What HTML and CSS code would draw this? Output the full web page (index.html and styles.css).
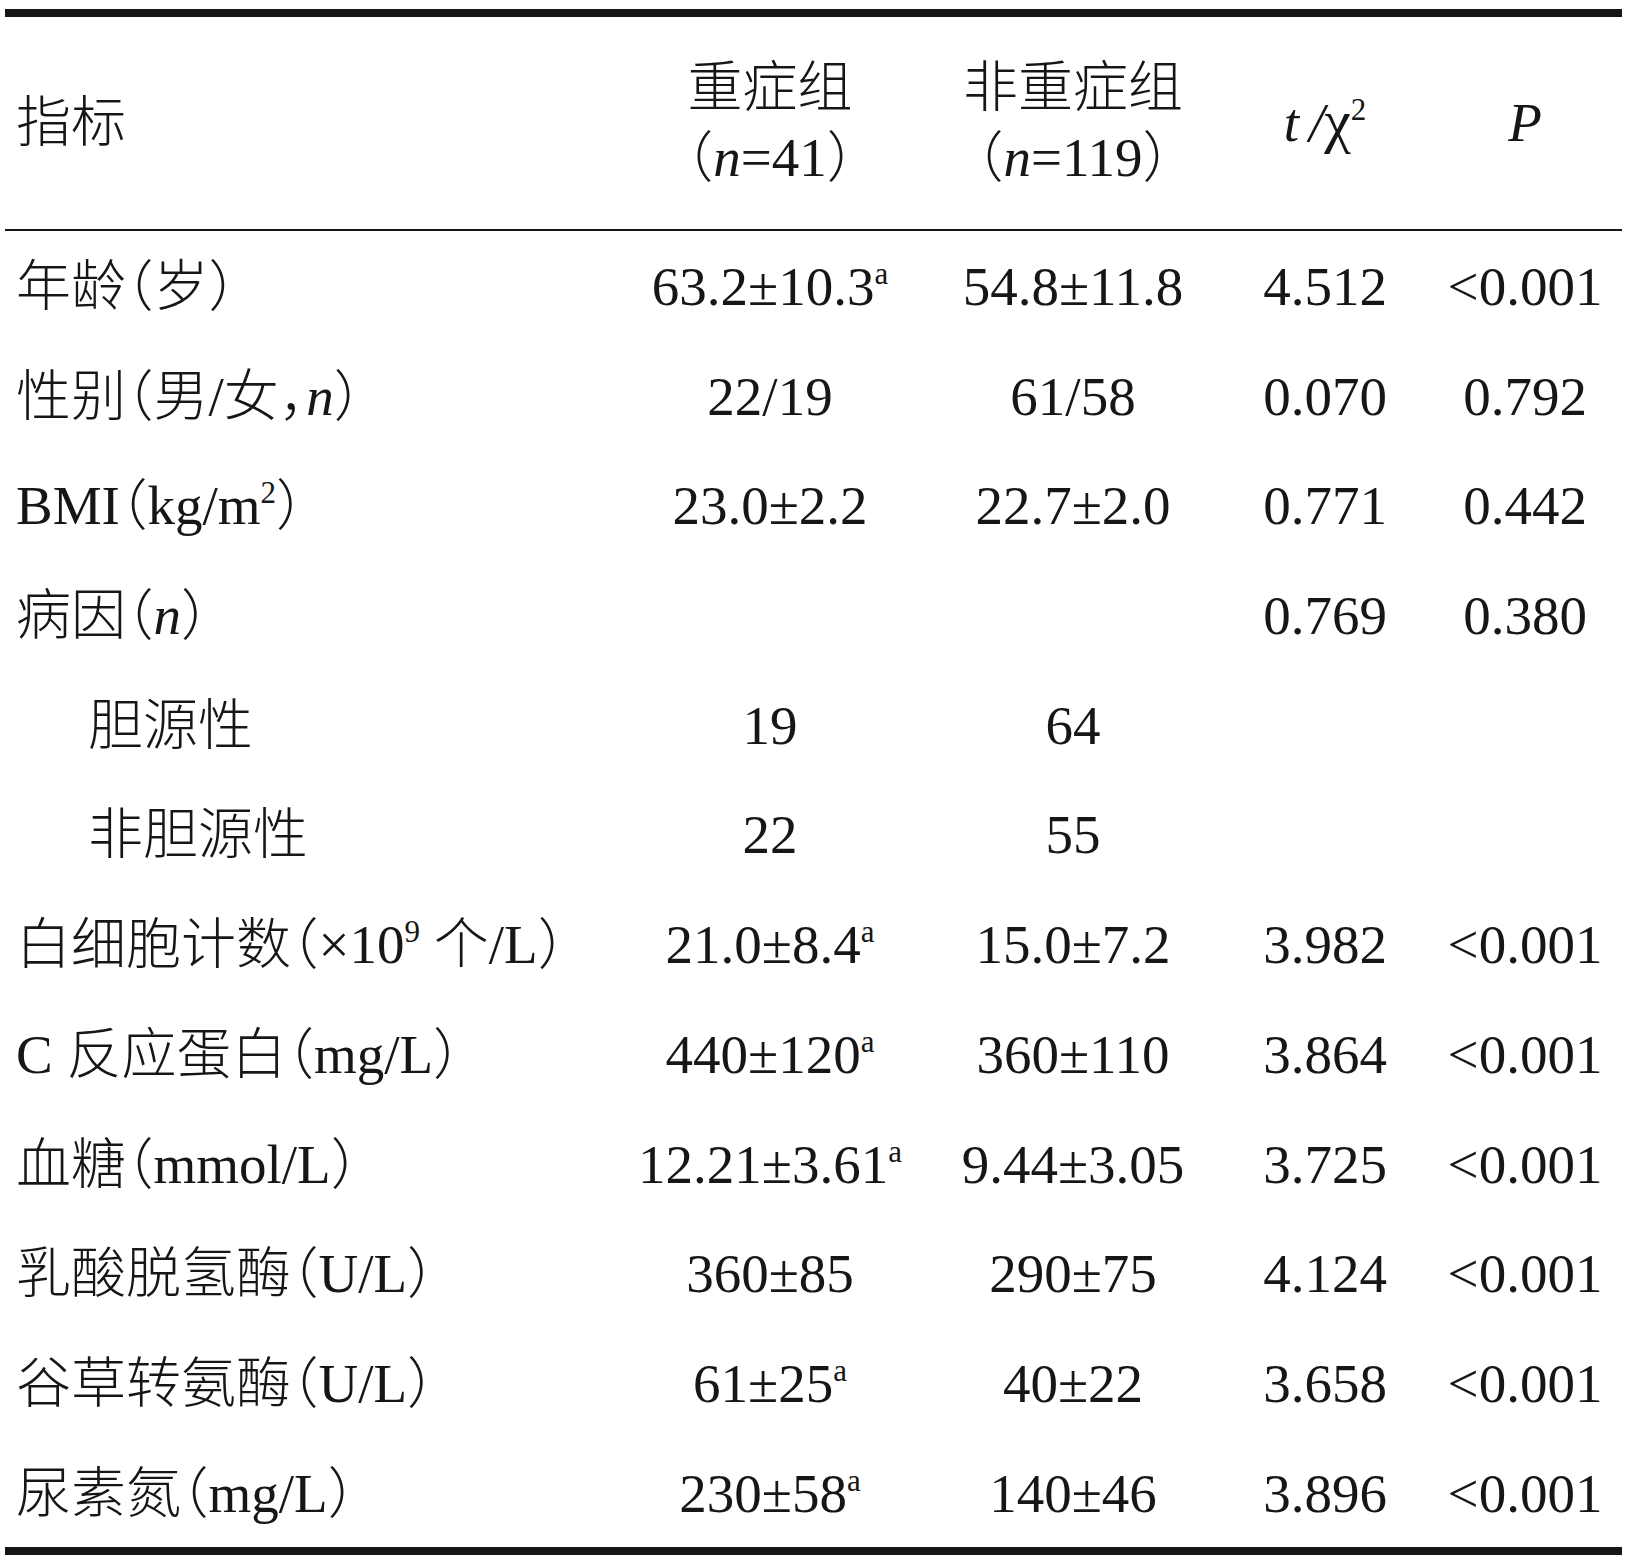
FILE: index.html
```html
<!DOCTYPE html>
<html lang="zh-CN">
<head>
<meta charset="utf-8">
<title>重症组与非重症组比较</title>
<link rel="stylesheet" href="styles.css">
</head>
<body>
<div class="table">
  <div class="rule thick"></div>
  <div class="row head">
    <div class="cell label">指标</div>
    <div class="cell"><span>重症组</span><span>（<i>n</i>=41）</span></div>
    <div class="cell"><span>非重症组</span><span>（<i>n</i>=119）</span></div>
    <div class="cell"><span><i class="t">t</i><i>/</i><span class="chi">χ</span><sup class="sup">2</sup></span></div>
    <div class="cell last"><span><i>P</i></span></div>
  </div>
  <div class="rule thin"></div>

  <div class="row">
    <div class="cell label">年龄（岁）</div>
    <div class="cell">63.2±10.3<sup class="sup">a</sup></div>
    <div class="cell">54.8±11.8</div>
    <div class="cell">4.512</div>
    <div class="cell last">&lt;0.001</div>
  </div>
  <div class="row">
    <div class="cell label">性别（男/女，<i>n</i>）</div>
    <div class="cell">22/19</div>
    <div class="cell">61/58</div>
    <div class="cell">0.070</div>
    <div class="cell last">0.792</div>
  </div>
  <div class="row">
    <div class="cell label">BMI（kg/m<sup class="sup">2</sup>）</div>
    <div class="cell">23.0±2.2</div>
    <div class="cell">22.7±2.0</div>
    <div class="cell">0.771</div>
    <div class="cell last">0.442</div>
  </div>
  <div class="row">
    <div class="cell label">病因（<i>n</i>）</div>
    <div class="cell"></div>
    <div class="cell"></div>
    <div class="cell">0.769</div>
    <div class="cell last">0.380</div>
  </div>
  <div class="row">
    <div class="cell label sub">胆源性</div>
    <div class="cell">19</div>
    <div class="cell">64</div>
    <div class="cell"></div>
    <div class="cell last"></div>
  </div>
  <div class="row">
    <div class="cell label sub">非胆源性</div>
    <div class="cell">22</div>
    <div class="cell">55</div>
    <div class="cell"></div>
    <div class="cell last"></div>
  </div>
  <div class="row">
    <div class="cell label">白细胞计数（×10<sup class="sup">9</sup> 个/L）</div>
    <div class="cell">21.0±8.4<sup class="sup">a</sup></div>
    <div class="cell">15.0±7.2</div>
    <div class="cell">3.982</div>
    <div class="cell last">&lt;0.001</div>
  </div>
  <div class="row">
    <div class="cell label">C 反应蛋白（mg/L）</div>
    <div class="cell">440±120<sup class="sup">a</sup></div>
    <div class="cell">360±110</div>
    <div class="cell">3.864</div>
    <div class="cell last">&lt;0.001</div>
  </div>
  <div class="row">
    <div class="cell label">血糖（mmol/L）</div>
    <div class="cell">12.21±3.61<sup class="sup">a</sup></div>
    <div class="cell">9.44±3.05</div>
    <div class="cell">3.725</div>
    <div class="cell last">&lt;0.001</div>
  </div>
  <div class="row">
    <div class="cell label">乳酸脱氢酶（U/L）</div>
    <div class="cell">360±85</div>
    <div class="cell">290±75</div>
    <div class="cell">4.124</div>
    <div class="cell last">&lt;0.001</div>
  </div>
  <div class="row">
    <div class="cell label">谷草转氨酶（U/L）</div>
    <div class="cell">61±25<sup class="sup">a</sup></div>
    <div class="cell">40±22</div>
    <div class="cell">3.658</div>
    <div class="cell last">&lt;0.001</div>
  </div>
  <div class="row">
    <div class="cell label">尿素氮（mg/L）</div>
    <div class="cell">230±58<sup class="sup">a</sup></div>
    <div class="cell">140±46</div>
    <div class="cell">3.896</div>
    <div class="cell last">&lt;0.001</div>
  </div>
  <div class="rule thick"></div>
</div>
</body>
</html>
```

FILE: styles.css
```css
html, body {
  margin: 0;
  padding: 0;
  background: #ffffff;
}

body {
  padding: 9px 0 0 5px;
  color: #161616;
  font-family: "Liberation Serif", "Noto Sans CJK SC", serif;
  font-size: 55px;
  font-weight: 300;
  font-feature-settings: "halt";
}

.table {
  width: 1617px;
}

.rule {
  background: #161616;
}

.rule.thick {
  height: 8px;
}

.rule.thin {
  height: 2px;
}

.row {
  display: grid;
  grid-template-columns: 615px 300px 306px 198px 198px;
  height: 109.7px;
}

.cell {
  text-align: center;
  white-space: nowrap;
  line-height: 106.7px;
  padding-top: 3px;
}

.cell.last {
  padding-left: 4px;
}

.cell.label {
  text-align: left;
  padding-left: 11px;
}

.cell.label.sub {
  padding-left: 83px;
}

.row.head {
  height: 212px;
}

.row.head .cell {
  display: flex;
  flex-direction: column;
  justify-content: center;
  align-items: center;
  line-height: 70px;
  padding-top: 0;
}

.row.head .cell.label {
  align-items: flex-start;
}

i {
  font-style: italic;
}

.t {
  margin-right: 10px;
}

.chi {
  font-size: 60px;
  line-height: 1;
}

.sup {
  font-size: 31px;
  line-height: 1;
  vertical-align: 21px;
}
```
